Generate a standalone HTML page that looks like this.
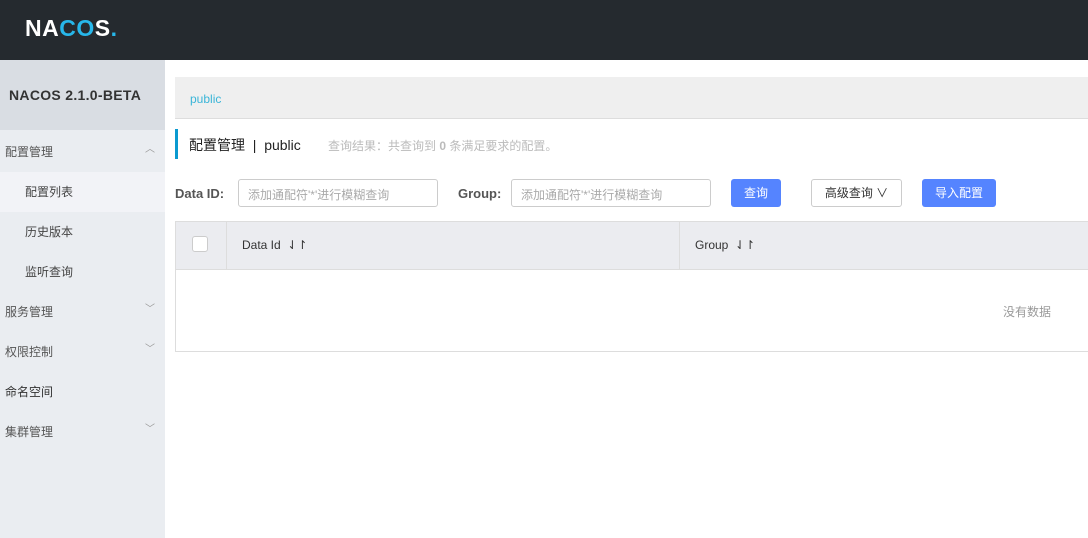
<!DOCTYPE html>
<html><head><meta charset="utf-8"><style>
*{margin:0;padding:0;box-sizing:border-box}
body{width:1088px;height:538px;overflow:hidden;background:#fff;font-family:"Liberation Sans","Noto Sans CJK SC",sans-serif;font-size:12px;color:#333;position:relative}
.hd{position:absolute;left:0;top:0;width:1088px;height:60px;background:#252a2f}
.logo{position:absolute;left:25px;top:15px;color:#fff;font-size:23px;font-weight:bold;letter-spacing:0.5px}
.sb{position:absolute;left:0;top:60px;width:165px;height:478px;background:#eaedf1}
.ver{height:70px;background:#d9dde3;font-weight:bold;font-size:14px;color:#333;padding:27px 0 0 9px;letter-spacing:0.3px}
.it{position:absolute;left:0;width:165px;height:40px;line-height:40px;font-size:12px;color:#555}
.it.sub{padding-left:25px;color:#444}
.it.top{padding-left:5px}
.ar{position:absolute;right:10px;top:-2px;color:#999;font-size:10px}
.crumb{position:absolute;left:175px;top:77px;width:913px;height:42px;background:#efefef;border-bottom:1px solid #ddd;color:#3ab5d8;padding:15px 0 0 15px;font-size:12px}
.tt{position:absolute;left:175px;top:129px;height:30px;border-left:3px solid #0a9ad0;padding:6px 0 0 11px;font-size:14px;color:#222}
.tip{position:absolute;left:328px;top:137px;color:#bbb;font-size:12px}
.lbl{position:absolute;top:186px;font-weight:bold;color:#555;font-size:13px}
.inp{position:absolute;top:179px;width:200px;height:28px;border:1px solid #ccc;border-radius:3px;color:#aaa;padding:6px 0 0 9px;font-size:12px}
.btn{position:absolute;top:179px;height:28px;border-radius:3px;background:#5584ff;color:#fff;text-align:center;line-height:28px;font-size:12px}
.tbl{position:absolute;left:175px;top:221px;width:913px;height:131px;border:1px solid #ddd;border-right:none}
.th{height:48px;background:#ebecf0;border-bottom:1px solid #ddd;position:relative}
.cb{position:absolute;left:16px;top:14px;width:16px;height:16px;border:1px solid #ccc;border-radius:3px;background:#fff}
.col{position:absolute;top:16px;color:#333;font-size:12px}
</style></head><body>
<div class="hd"><div class="logo">NA<span style="color:#27b7ea">C</span><span style="color:#27b7ea">O</span>S<span style="color:#27b7ea">.</span></div></div>
<div class="sb"><div class="ver">NACOS 2.1.0-BETA</div></div>
<div class="it top" style="top:132px">配置管理<span class="ar">︿</span></div>
<div class="it sub" style="top:172px;background:#f2f3f7">配置列表</div>
<div class="it sub" style="top:212px">历史版本</div>
<div class="it sub" style="top:252px">监听查询</div>
<div class="it top" style="top:292px">服务管理<span class="ar">﹀</span></div>
<div class="it top" style="top:332px">权限控制<span class="ar">﹀</span></div>
<div class="it top" style="top:372px;color:#333">命名空间</div>
<div class="it top" style="top:412px">集群管理<span class="ar">﹀</span></div>
<div class="crumb">public</div>
<div class="tt">配置管理 &nbsp;|&nbsp; public</div>
<div class="tip">查询结果：共查询到 <b>0</b> 条满足要求的配置。</div>
<div class="lbl" style="left:175px">Data ID:</div>
<div class="inp" style="left:238px">添加通配符'*'进行模糊查询</div>
<div class="lbl" style="left:458px">Group:</div>
<div class="inp" style="left:511px">添加通配符'*'进行模糊查询</div>
<div class="btn" style="left:731px;width:50px">查询</div>
<div class="btn" style="left:811px;width:91px;background:#fff;border:1px solid #ccc;color:#333;line-height:26px">高级查询 ∨</div>
<div class="btn" style="left:922px;width:74px">导入配置</div>
<div class="tbl"><div class="th"><div class="cb"></div>
<div style="position:absolute;left:50px;top:0;height:48px;border-left:1px solid #ddd"></div>
<div class="col" style="left:66px">Data Id &nbsp;⇃↾</div>
<div style="position:absolute;left:503px;top:0;height:48px;border-left:1px solid #ddd"></div>
<div class="col" style="left:519px">Group &nbsp;⇃↾</div></div>
<div style="position:absolute;left:827px;top:81px;color:#999">没有数据</div></div>
</body></html>
